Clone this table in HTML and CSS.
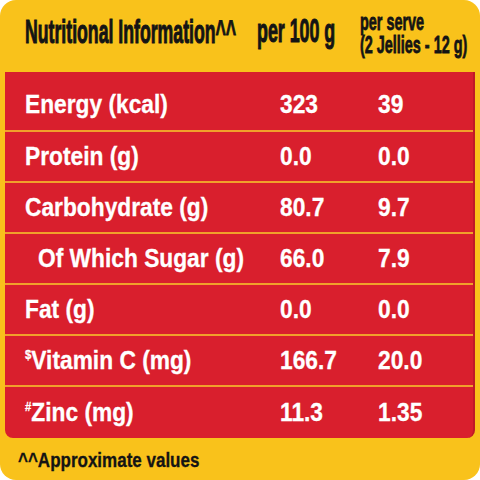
FILE: index.html
```html
<!DOCTYPE html>
<html lang="en">
<head>
    <meta charset="UTF-8">
    <title>Nutritional Information</title>
    <link rel="stylesheet" href="styles.css">
</head>
<body>
<div class="panel">
    <div class="head">
        <div class="head-title"><span class="squeeze">Nutritional Information^^</span></div>
        <div class="head-per"><span class="squeeze">per 100 g</span></div>
        <div class="head-serve">
            <span class="squeeze">per serve</span>
            <span class="squeeze">(2 Jellies - 12 g)</span>
        </div>
    </div>
    <div class="table">
        <div class="row first">
            <div class="name"><span class="narrow">Energy (kcal)</span></div>
            <div class="val"><span class="narrow">323</span></div>
            <div class="val"><span class="narrow">39</span></div>
        </div>
        <div class="row">
            <div class="name"><span class="narrow">Protein (g)</span></div>
            <div class="val"><span class="narrow">0.0</span></div>
            <div class="val"><span class="narrow">0.0</span></div>
        </div>
        <div class="row">
            <div class="name"><span class="narrow">Carbohydrate (g)</span></div>
            <div class="val"><span class="narrow">80.7</span></div>
            <div class="val"><span class="narrow">9.7</span></div>
        </div>
        <div class="row">
            <div class="name sub"><span class="narrow">Of Which Sugar (g)</span></div>
            <div class="val"><span class="narrow">66.0</span></div>
            <div class="val"><span class="narrow">7.9</span></div>
        </div>
        <div class="row">
            <div class="name"><span class="narrow">Fat (g)</span></div>
            <div class="val"><span class="narrow">0.0</span></div>
            <div class="val"><span class="narrow">0.0</span></div>
        </div>
        <div class="row">
            <div class="name"><span class="narrow"><sup>$</sup>Vitamin C (mg)</span></div>
            <div class="val"><span class="narrow">166.7</span></div>
            <div class="val"><span class="narrow">20.0</span></div>
        </div>
        <div class="row last">
            <div class="name"><span class="narrow"><sup>#</sup>Zinc (mg)</span></div>
            <div class="val"><span class="narrow">11.3</span></div>
            <div class="val"><span class="narrow">1.35</span></div>
        </div>
    </div>
    <div class="foot"><span class="foot-text">^^Approximate values</span></div>
</div>
</body>
</html>
```

FILE: styles.css
```css
body {
    margin: 0;
    background-color: #ffffff;
    font-family: "Liberation Sans", Arial, sans-serif;
    font-weight: bold;
}
.panel {
    width: 480px;
    height: 480px;
    overflow: hidden;
    background-color: #f9c21b;
    border-radius: 16px;
    display: flex;
    flex-direction: column;
}
.squeeze, .narrow, .foot-text {
    display: inline-block;
    white-space: nowrap;
    transform-origin: left center;
}
.squeeze {
    transform: scaleX(0.52);
    -webkit-text-stroke: 1.1px #141414;
}
.narrow {
    transform: scaleX(0.875);
    -webkit-text-stroke: 0.3px #ffffff;
}
.head {
    height: 72px;
    display: grid;
    grid-template-columns: 232px 103px 120px;
    align-items: start;
    padding-left: 25px;
    color: #141414;
}
.head-title {
    font-size: 34px;
    line-height: 38px;
    padding-top: 12px;
    min-width: 0;
}
.head-per {
    font-size: 33px;
    line-height: 38px;
    padding-top: 12px;
    min-width: 0;
}
.head-per .squeeze {
    transform: scaleX(0.54);
}
.head-serve {
    display: flex;
    flex-direction: column;
    align-items: flex-start;
    padding-top: 10px;
    font-size: 24px;
    line-height: 23px;
    min-width: 0;
}
.head-serve .squeeze {
    transform: scaleX(0.6);
    -webkit-text-stroke: 0.8px #141414;
}
.table {
    margin: 0 5px;
    background-color: #d91f2d;
    border-radius: 0 0 8px 8px;
    border-right: 2px solid #bf1a27;
    color: #ffffff;
}
.row {
    height: 49px;
    display: grid;
    grid-template-columns: 255px 98px auto;
    align-items: center;
    padding-left: 20px;
    font-size: 26px;
    border-top: 2px solid #f1a02b;
}
.row.first {
    height: 52px;
    padding-top: 6px;
    border-top: none;
}
.row.last {
    height: 51px;
}
.name.sub {
    padding-left: 13px;
}
sup {
    font-size: 13px;
    vertical-align: 10px;
    line-height: 0;
}
.foot {
    font-size: 20px;
    line-height: 24px;
    padding: 10px 0 0 18px;
    color: #141414;
}
.foot-text {
    transform: scaleX(0.85);
    -webkit-text-stroke: 0.3px #141414;
}
```
